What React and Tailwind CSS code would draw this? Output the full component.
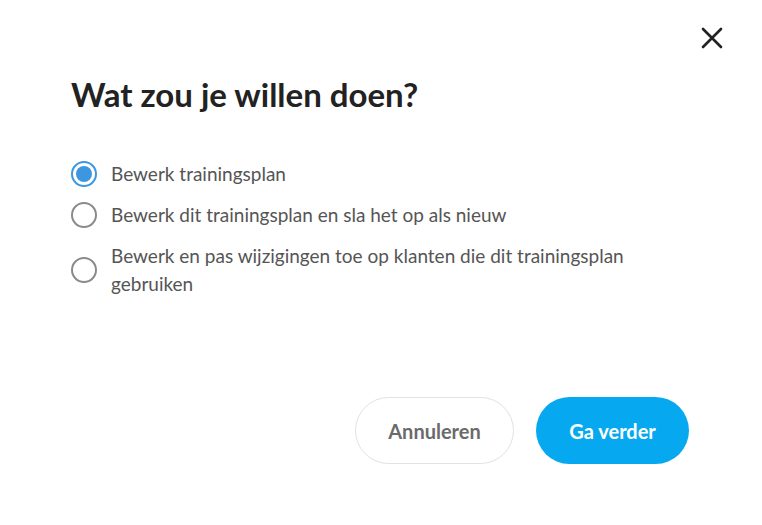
import React, { useState } from "react";

const options = [
  "Bewerk trainingsplan",
  "Bewerk dit trainingsplan en sla het op als nieuw",
  "Bewerk en pas wijzigingen toe op klanten die dit trainingsplan gebruiken",
];

const Radio = ({ checked }) => (
  <span
    className={`flex h-[26px] w-[26px] shrink-0 items-center justify-center rounded-full border-2 ${
      checked ? "border-[#3d97e0]" : "border-[#8a8a8a]"
    }`}
  >
    {checked && <span className="h-[16px] w-[16px] rounded-full bg-[#3d97e0]" />}
  </span>
);

const App = () => {
  const [selected, setSelected] = useState(0);

  return (
    <div className="relative h-[525px] w-[762px] bg-white font-['Lato',sans-serif] text-[#333]">
      {/* Close button */}
      <button className="absolute right-[39px] top-[27px] flex h-[22px] w-[22px] items-center justify-center">
        <svg width="22" height="22" viewBox="0 0 22 22" fill="none">
          <path d="M2 2L20 20M20 2L2 20" stroke="#222" strokeWidth="2.6" strokeLinecap="round" />
        </svg>
      </button>

      <div className="flex flex-col pl-[71px] pr-[73px] pt-[72px]">
        <h1 className="text-[33px] font-bold leading-[44px] text-[#222]">Wat zou je willen doen?</h1>

        {/* Options */}
        <div className="mt-[44px] flex flex-col gap-[13px]">
          {options.map((label, i) => (
            <label
              key={label}
              onClick={() => setSelected(i)}
              className="flex cursor-pointer items-center gap-[15px]"
            >
              <Radio checked={selected === i} />
              <span className="-ml-px text-[19px] leading-[28px] text-[#555]">{label}</span>
            </label>
          ))}
        </div>

        {/* Buttons */}
        <div className="mt-[99px] flex justify-end gap-[22px]">
          <button className="h-[67px] w-[159px] rounded-full border border-[#e2e2e2] bg-white text-[20px] font-bold text-[#6b6b6b]">
            Annuleren
          </button>
          <button className="h-[67px] w-[153px] rounded-full bg-[#06a9f0] text-[20px] font-bold text-white">
            Ga verder
          </button>
        </div>
      </div>
    </div>
  );
};

export default App;
